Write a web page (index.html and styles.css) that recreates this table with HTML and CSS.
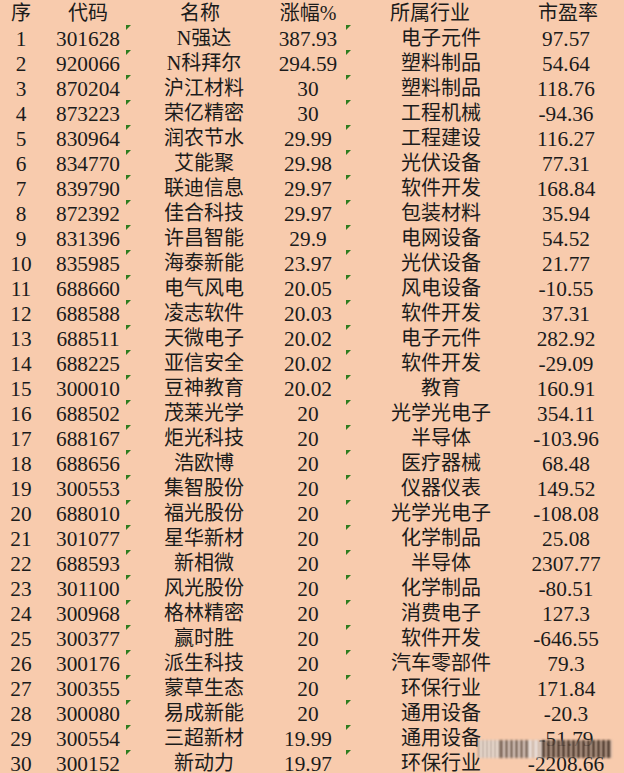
FILE: index.html
```html
<!DOCTYPE html>
<html lang="zh-CN">
<head>
<meta charset="utf-8">
<title>涨幅榜</title>
<link rel="stylesheet" href="styles.css">
</head>
<body>
<div class="sheet">
  <div class="row head">
    <div class="c">序</div>
    <div class="c">代码</div>
    <div class="c h-name">名称</div>
    <div class="c">涨幅%</div>
    <div class="c h-ind">所属行业</div>
    <div class="c h-pe">市盈率</div>
  </div>
  <div class="row"><div class="c num">1</div><div class="c num">301628</div><div class="c">N强达</div><div class="c num">387.93</div><div class="c">电子元件</div><div class="c num">97.57</div></div>
  <div class="row"><div class="c num">2</div><div class="c num">920066</div><div class="c">N科拜尔</div><div class="c num">294.59</div><div class="c">塑料制品</div><div class="c num">54.64</div></div>
  <div class="row"><div class="c num">3</div><div class="c num">870204</div><div class="c">沪江材料</div><div class="c num">30</div><div class="c">塑料制品</div><div class="c num">118.76</div></div>
  <div class="row"><div class="c num">4</div><div class="c num">873223</div><div class="c">荣亿精密</div><div class="c num">30</div><div class="c">工程机械</div><div class="c num">-94.36</div></div>
  <div class="row"><div class="c num">5</div><div class="c num">830964</div><div class="c">润农节水</div><div class="c num">29.99</div><div class="c">工程建设</div><div class="c num">116.27</div></div>
  <div class="row"><div class="c num">6</div><div class="c num">834770</div><div class="c">艾能聚</div><div class="c num">29.98</div><div class="c">光伏设备</div><div class="c num">77.31</div></div>
  <div class="row"><div class="c num">7</div><div class="c num">839790</div><div class="c">联迪信息</div><div class="c num">29.97</div><div class="c">软件开发</div><div class="c num">168.84</div></div>
  <div class="row"><div class="c num">8</div><div class="c num">872392</div><div class="c">佳合科技</div><div class="c num">29.97</div><div class="c">包装材料</div><div class="c num">35.94</div></div>
  <div class="row"><div class="c num">9</div><div class="c num">831396</div><div class="c">许昌智能</div><div class="c num">29.9</div><div class="c">电网设备</div><div class="c num">54.52</div></div>
  <div class="row"><div class="c num">10</div><div class="c num">835985</div><div class="c">海泰新能</div><div class="c num">23.97</div><div class="c">光伏设备</div><div class="c num">21.77</div></div>
  <div class="row"><div class="c num">11</div><div class="c num">688660</div><div class="c">电气风电</div><div class="c num">20.05</div><div class="c">风电设备</div><div class="c num">-10.55</div></div>
  <div class="row"><div class="c num">12</div><div class="c num">688588</div><div class="c">凌志软件</div><div class="c num">20.03</div><div class="c">软件开发</div><div class="c num">37.31</div></div>
  <div class="row"><div class="c num">13</div><div class="c num">688511</div><div class="c">天微电子</div><div class="c num">20.02</div><div class="c">电子元件</div><div class="c num">282.92</div></div>
  <div class="row"><div class="c num">14</div><div class="c num">688225</div><div class="c">亚信安全</div><div class="c num">20.02</div><div class="c">软件开发</div><div class="c num">-29.09</div></div>
  <div class="row"><div class="c num">15</div><div class="c num">300010</div><div class="c">豆神教育</div><div class="c num">20.02</div><div class="c">教育</div><div class="c num">160.91</div></div>
  <div class="row"><div class="c num">16</div><div class="c num">688502</div><div class="c">茂莱光学</div><div class="c num">20</div><div class="c">光学光电子</div><div class="c num">354.11</div></div>
  <div class="row"><div class="c num">17</div><div class="c num">688167</div><div class="c">炬光科技</div><div class="c num">20</div><div class="c">半导体</div><div class="c num">-103.96</div></div>
  <div class="row"><div class="c num">18</div><div class="c num">688656</div><div class="c">浩欧博</div><div class="c num">20</div><div class="c">医疗器械</div><div class="c num">68.48</div></div>
  <div class="row"><div class="c num">19</div><div class="c num">300553</div><div class="c">集智股份</div><div class="c num">20</div><div class="c">仪器仪表</div><div class="c num">149.52</div></div>
  <div class="row"><div class="c num">20</div><div class="c num">688010</div><div class="c">福光股份</div><div class="c num">20</div><div class="c">光学光电子</div><div class="c num">-108.08</div></div>
  <div class="row"><div class="c num">21</div><div class="c num">301077</div><div class="c">星华新材</div><div class="c num">20</div><div class="c">化学制品</div><div class="c num">25.08</div></div>
  <div class="row"><div class="c num">22</div><div class="c num">688593</div><div class="c">新相微</div><div class="c num">20</div><div class="c">半导体</div><div class="c num">2307.77</div></div>
  <div class="row"><div class="c num">23</div><div class="c num">301100</div><div class="c">风光股份</div><div class="c num">20</div><div class="c">化学制品</div><div class="c num">-80.51</div></div>
  <div class="row"><div class="c num">24</div><div class="c num">300968</div><div class="c">格林精密</div><div class="c num">20</div><div class="c">消费电子</div><div class="c num">127.3</div></div>
  <div class="row"><div class="c num">25</div><div class="c num">300377</div><div class="c">赢时胜</div><div class="c num">20</div><div class="c">软件开发</div><div class="c num">-646.55</div></div>
  <div class="row"><div class="c num">26</div><div class="c num">300176</div><div class="c">派生科技</div><div class="c num">20</div><div class="c">汽车零部件</div><div class="c num">79.3</div></div>
  <div class="row"><div class="c num">27</div><div class="c num">300355</div><div class="c">蒙草生态</div><div class="c num">20</div><div class="c">环保行业</div><div class="c num">171.84</div></div>
  <div class="row"><div class="c num">28</div><div class="c num">300080</div><div class="c">易成新能</div><div class="c num">20</div><div class="c">通用设备</div><div class="c num">-20.3</div></div>
  <div class="row"><div class="c num">29</div><div class="c num">300554</div><div class="c">三超新材</div><div class="c num">19.99</div><div class="c">通用设备</div><div class="c num">-51.79</div></div>
  <div class="row"><div class="c num">30</div><div class="c num">300152</div><div class="c">新动力</div><div class="c num">19.97</div><div class="c">环保行业</div><div class="c num">-2208.66</div></div>
</div>
<div class="wm"><span class="wm-a"></span><span class="wm-b"></span><span class="wm-gap"></span><span class="wm-c"></span></div>
</body>
</html>
```

FILE: styles.css
```css
html, body {
  margin: 0;
  padding: 0;
  background: #f8cbad;
}
body {
  width: 624px;
  height: 773px;
  overflow: hidden;
  position: relative;
  font-family: "Liberation Serif", "Noto Sans CJK SC", serif;
  color: #1b1b1b;
}
.sheet {
  display: flex;
  flex-direction: column;
}
.row {
  position: relative;
  display: grid;
  grid-template-columns: 42px 92px 140px 68px 198px 52px;
  height: 25px;
}
.row:not(.head)::before,
.row:not(.head)::after {
  content: "";
  position: absolute;
  top: 0;
  width: 0;
  height: 0;
  border-top: 5px solid #2f7d1f;
  border-right: 5px solid transparent;
}
.row:not(.head)::before { left: 126px; }
.row:not(.head)::after { left: 346px; }
.c {
  display: flex;
  justify-content: center;
  white-space: nowrap;
  font-size: 20px;
  line-height: 25px;
  height: 25px;
  box-sizing: border-box;
  padding-top: 1px;
}
.c.num {
  font-size: 21.3px;
  padding-top: 2px;
}
.h-name { padding-right: 8px; }
.h-ind { padding-right: 22px; }
.h-pe { padding-left: 4px; }

.wm {
  position: absolute;
  left: 478px;
  top: 740px;
  width: 134px;
  height: 18px;
  display: flex;
  filter: blur(1.2px);
}
.wm span { display: block; height: 100%; }
.wm-a {
  width: 22px;
  background: repeating-linear-gradient(90deg, rgba(150,140,135,0.7) 0 2px, rgba(255,250,245,0.8) 2px 4px);
}
.wm-b {
  width: 28px;
  background: repeating-linear-gradient(90deg, rgba(90,75,65,0.8) 0 3px, rgba(240,230,225,0.8) 3px 5px);
}
.wm-gap {
  width: 14px;
  background: repeating-linear-gradient(90deg, rgba(230,222,218,0.9) 0 4px, rgba(170,155,145,0.6) 4px 6px);
}
.wm-c {
  width: 70px;
  background: repeating-linear-gradient(90deg, rgba(55,38,28,0.9) 0 3px, rgba(200,175,160,0.8) 3px 5px);
}
```
